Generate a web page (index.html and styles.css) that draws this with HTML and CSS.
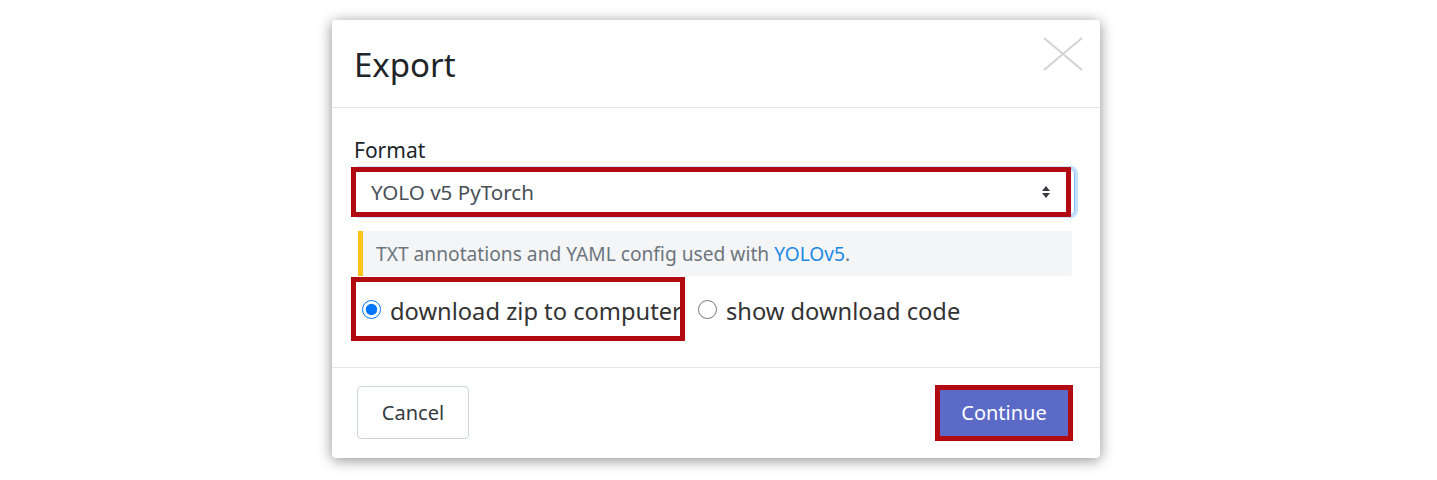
FILE: index.html
```html
<!DOCTYPE html>
<html lang="en">
<head>
<meta charset="utf-8">
<title>Export</title>
<link rel="stylesheet" href="styles.css">
</head>
<body>
<div class="modal">
  <div class="modal-header">
    <h5 class="modal-title">Export</h5>
    <svg class="close" width="40" height="34" viewBox="0 0 40 34"><path d="M1 1L39 33M39 1L1 33" stroke="#d3d3d3" stroke-width="2" fill="none"/></svg>
  </div>
  <div class="modal-body">
    <div class="label">Format</div>
    <div class="field hl-select">
      <div class="select">
        <span>YOLO v5 PyTorch</span>
        <svg width="10" height="16" viewBox="0 0 10 16"><path d="M1 7L5 2L9 7Z M1 9L5 14L9 9Z" fill="#343a40"/></svg>
      </div>
    </div>
    <div class="info">TXT annotations and YAML config used with <a class="link">YOLOv5</a>.</div>
    <div class="radios">
      <label class="opt opt-first hl-opt"><input type="radio" name="dl" checked><span class="opt-text">download zip to computer</span></label>
      <label class="opt"><input type="radio" name="dl"><span class="opt-text">show download code</span></label>
    </div>
  </div>
  <div class="modal-footer">
    <button class="btn btn-cancel">Cancel</button>
    <button class="btn btn-continue">Continue</button>
  </div>
</div>
</body>
</html>
```
FILE: styles.css
```css
html, body {
  margin: 0;
  padding: 0;
  background: #ffffff;
  font-family: "Noto Sans", "Open Sans", sans-serif;
  color: #212529;
}
body {
  padding-bottom: 22px;
}
.modal {
  width: 768px;
  margin: 20px 0 0 332px;
  background: #fff;
  border-radius: 4px;
  box-shadow: 0 2px 14px rgba(0, 0, 0, 0.45);
}
.modal-header {
  display: flex;
  justify-content: space-between;
  align-items: flex-start;
  padding: 25px 17px 22px 22px;
  border-bottom: 1px solid #e3e6ea;
}
.modal-title {
  margin: 0;
  font-size: 33px;
  line-height: 40px;
  font-weight: 400;
  color: #212529;
}
.close {
  margin-top: -8px;
  display: block;
}
.modal-body {
  padding: 27px 25px 26px 23px;
}
.label {
  font-size: 21px;
  line-height: 30px;
  color: #212529;
  margin-left: -1px;
}
.field {
  position: relative;
  margin-top: 4px;
}
.hl-select::after {
  content: "";
  position: absolute;
  top: -2px;
  bottom: -2px;
  left: -4px;
  right: 4px;
  border: 5px solid #b10a10;
}
.select {
  height: 46px;
  box-sizing: border-box;
  border: 1px solid #80bdff;
  border-radius: 4px;
  box-shadow: 0 0 0 3px rgba(0, 123, 255, 0.22);
  display: flex;
  align-items: center;
  justify-content: space-between;
  padding: 0 23px 0 15px;
  font-size: 20.6px;
  color: #495057;
}
.info {
  margin: 16px 3px 0 3px;
  height: 45px;
  line-height: 45px;
  box-sizing: border-box;
  background: #f4f5f7;
  border-left: 5px solid #fcc419;
  border-radius: 0 3px 3px 0;
  padding: 0 13px;
  font-size: 19.2px;
  color: #6c757d;
}
.link {
  color: #1e88e5;
}
.radios {
  display: flex;
  align-items: center;
  height: 64px;
  margin-top: 1px;
}
.opt {
  position: relative;
  display: flex;
  align-items: center;
  height: 64px;
  font-size: 23.7px;
  color: #333;
}
.opt-text {
  padding-top: 3px;
}
.opt-first {
  padding-left: 7px;
  margin-right: 16px;
}
.opt input {
  width: 19px;
  height: 19px;
  margin: 0 9px 0 0;
}
.hl-opt::after {
  content: "";
  position: absolute;
  top: 0;
  bottom: 0;
  left: -4px;
  right: -3px;
  border: 5px solid #b10a10;
}
.modal-footer {
  display: flex;
  justify-content: space-between;
  align-items: center;
  border-top: 1px solid #e3e6ea;
  padding: 18px 32px 19px 25px;
}
.btn {
  font-family: "Noto Sans", "Open Sans", sans-serif;
  font-size: 20px;
  border-radius: 4px;
  cursor: pointer;
}
.btn-cancel {
  width: 112px;
  height: 53px;
  background: #fff;
  border: 1px solid #ced4da;
  color: #343a40;
}
.btn-continue {
  width: 128px;
  height: 46px;
  background: #5b6ac6;
  border: none;
  border-radius: 0;
  color: #fff;
  outline: 5px solid #b10a10;
}
```
